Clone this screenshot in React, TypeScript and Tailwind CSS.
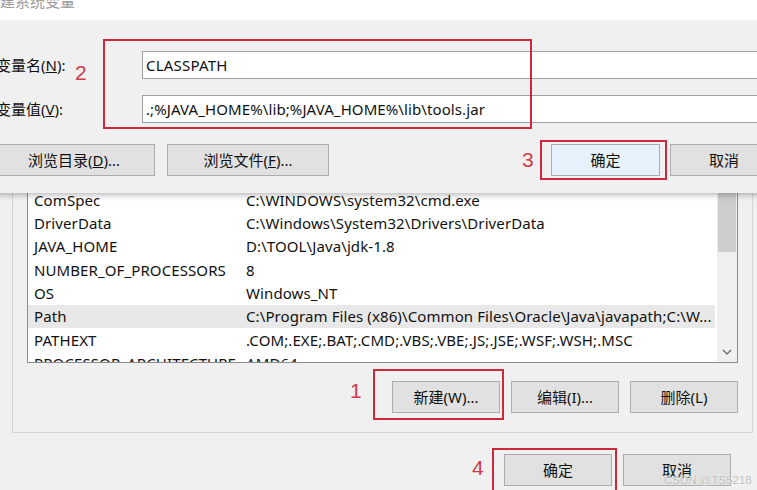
import React from "react";

const rows: [string, string][] = [
  ["ComSpec", "C:\\WINDOWS\\system32\\cmd.exe"],
  ["DriverData", "C:\\Windows\\System32\\Drivers\\DriverData"],
  ["JAVA_HOME", "D:\\TOOL\\Java\\jdk-1.8"],
  ["NUMBER_OF_PROCESSORS", "8"],
  ["OS", "Windows_NT"],
  ["Path", "C:\\Program Files (x86)\\Common Files\\Oracle\\Java\\javapath;C:\\W..."],
  ["PATHEXT", ".COM;.EXE;.BAT;.CMD;.VBS;.VBE;.JS;.JSE;.WSF;.WSH;.MSC"],
  ["PROCESSOR_ARCHITECTURE", "AMD64"],
];

function Btn({ children, className = "" }: { children: React.ReactNode; className?: string }) {
  return (
    <div
      className={
        "flex items-center justify-center h-[32px] border border-[#adadad] bg-[#e1e1e1] text-[15px] text-[#111] whitespace-nowrap " +
        className
      }
    >
      {children}
    </div>
  );
}

export default function App() {
  return (
    <div className="relative w-[757px] h-[490px] overflow-hidden bg-[#f0f0f0] font-['Noto_Sans','Noto_Sans_CJK_SC',sans-serif] text-[15px] text-[#111]">
      {/* background window */}
      <div className="pt-[140px] pl-[12px] pr-[4px]">
        <div className="border border-[#d5d5d5] pt-[9px] px-[14px] pb-[19px]">
          <div className="h-[213px] border border-[#8c8c8c] bg-white flex overflow-hidden">
            <div className="flex-1 pt-[37.3px] pr-[2px] overflow-hidden">
              {rows.map(([k, v]) => (
                <div
                  key={k}
                  className={
                    "h-[23.33px] flex items-center whitespace-nowrap " + (k === "Path" ? "bg-[#e8e8e8]" : "")
                  }
                >
                  <div className="w-[218px] pl-[6px] shrink-0 tracking-[0.1px]">{k}</div>
                  <div className="tracking-[0.1px]">{v}</div>
                </div>
              ))}
            </div>
            <div className="w-[20px] bg-[#f0f0f0] flex flex-col">
              <div className="mt-[19px] h-[82px] mx-[1px] bg-[#cdcdcd]" />
              <div className="mt-auto h-[20px] flex items-center justify-center">
                <svg width="10" height="6" viewBox="0 0 10 6">
                  <path d="M1 1 L5 5 L9 1" fill="none" stroke="#606060" strokeWidth="1.2" />
                </svg>
              </div>
            </div>
          </div>
          <div className="flex justify-end gap-[11px] mt-[18px]">
            <Btn className="w-[108px]">新建(W)...</Btn>
            <Btn className="w-[108px]">编辑(I)...</Btn>
            <Btn className="w-[108px]">删除(L)</Btn>
          </div>
        </div>
      </div>
      <div className="flex justify-end gap-[11px] mt-[21px] pr-[26px]">
        <Btn className="w-[108px]">确定</Btn>
        <Btn className="w-[108px]">取消</Btn>
      </div>

      {/* foreground dialog */}
      <div className="absolute left-[-20px] top-0 w-[811px] h-[193px] flex flex-col bg-[#f0f0f0] shadow-[0_2px_6px_rgba(0,0,0,0.28)]">
        <div className="h-[20px] bg-white pl-[5px] overflow-hidden">
          <div className="-mt-[6px] leading-[15px] text-[15px] text-[#9a9a9a]">新建系统变量</div>
        </div>
        <div className="flex-1 flex flex-col pt-[31px] px-[13px]">
          <div className="flex items-center h-[28px]">
            <div className="w-[149px] pl-[3px] shrink-0">
              变量名(<span className="underline">N</span>):
            </div>
            <div className="flex-1 h-full bg-white border border-[#a0a0a0] pl-[3px] flex items-center tracking-[0.2px]">CLASSPATH</div>
          </div>
          <div className="flex items-center h-[28px] mt-[16px]">
            <div className="w-[149px] pl-[3px] shrink-0">
              变量值(<span className="underline">V</span>):
            </div>
            <div className="flex-1 h-full bg-white border border-[#a0a0a0] pl-[3px] flex items-center whitespace-nowrap tracking-[0.1px]">
              {".;%JAVA_HOME%\\lib;%JAVA_HOME%\\lib\\tools.jar"}
            </div>
          </div>
          <div className="flex items-center mt-[21px] gap-[12px]">
            <Btn className="w-[162px]">
              浏览目录(<span className="underline">D</span>)...
            </Btn>
            <Btn className="w-[162px]">
              浏览文件(<span className="underline">F</span>)...
            </Btn>
            <Btn className="w-[109px] ml-auto bg-[#e5f1fb] border-[#0078d7]">确定</Btn>
            <Btn className="w-[108px] -ml-[2px]">取消</Btn>
          </div>
        </div>
      </div>

      {/* annotations */}
      <div className="absolute left-[103px] top-[39px] w-[429px] h-[90px] border-2 border-[#cc2a3c]" />
      <div className="absolute left-[75px] top-[61px] text-[21px] leading-[24px] text-[#d03a4a] font-['Liberation_Sans',sans-serif]">2</div>
      <div className="absolute left-[540px] top-[140px] w-[127px] h-[40px] border-2 border-[#cc2a3c]" />
      <div className="absolute left-[522px] top-[148px] text-[21px] leading-[24px] text-[#d03a4a] font-['Liberation_Sans',sans-serif]">3</div>
      <div className="absolute left-[373px] top-[369px] w-[131px] h-[51px] border-2 border-[#cc2a3c]" />
      <div className="absolute left-[350px] top-[379px] text-[21px] leading-[24px] text-[#d03a4a] font-['Liberation_Sans',sans-serif]">1</div>
      <div className="absolute left-[492px] top-[448px] w-[125px] h-[50px] border-2 border-[#cc2a3c]" />
      <div className="absolute left-[472px] top-[456px] text-[21px] leading-[24px] text-[#d03a4a] font-['Liberation_Sans',sans-serif]">4</div>
      <div className="absolute left-[664px] top-[473px] text-[11.5px] leading-[15px] text-[#bdbdbd] [text-shadow:0_0_2px_#ffffff] font-['Liberation_Sans',sans-serif] whitespace-nowrap">
        CSDN @TS5218
      </div>
    </div>
  );
}
